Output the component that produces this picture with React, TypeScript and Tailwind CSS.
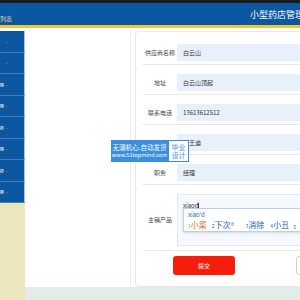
export default function App() {
  const rows = [
    { label: '供应商名称', value: '白云山' },
    { label: '地址', value: '白云山顶起' },
    { label: '联系电话', value: '13613612512' },
    { label: '联系人', value: '李王迪' },
    { label: '职务', value: '经理' },
  ];
  const side = ['', '', '理', '理', '择', '理', '择', '理'];

  return (
    <div className="w-[300px] h-[300px] overflow-hidden relative flex flex-col bg-white font-['Noto_Sans_CJK_SC',sans-serif]">
      <div className="h-[3px] shrink-0 bg-[#1b1b1b]" />
      <div className="h-[22px] shrink-0 bg-[#0b57a2] flex items-center">
        <span className="mt-[10px] text-[6px] leading-none text-[#e8dc9a] whitespace-nowrap">列表</span>
        <span className="ml-auto w-[50px] overflow-hidden whitespace-nowrap text-[9px] leading-none text-white">小型药店管理系统</span>
      </div>
      <div className="h-[3px] shrink-0 bg-[#f4c430]" />

      <div className="flex flex-1 min-h-0">
        {/* sidebar */}
        <div className="w-[25px] shrink-0 flex flex-col bg-[#ece6bf]">
          <div className="h-[3px] bg-white" />
          {side.map((ch, i) => (
            <div
              key={i}
              className="h-[21.5px] flex items-center gap-[2px] bg-[#0c57a0] border-b border-[#3f7fc0] border-r border-r-[#a9c3dc] text-[5px] leading-none text-white"
            >
              <span className="w-[4px] overflow-hidden whitespace-nowrap flex justify-end">{ch}</span>
              <span className="text-[#9fbde0]">-</span>
            </div>
          ))}
        </div>

        {/* main */}
        <div className="flex-1 flex flex-col min-w-0">
          <div className="h-[259px] shrink-0 flex bg-white">
            <div className="w-[106px] shrink-0 border-r border-[#efefef]" />
            <div className="w-[4px] shrink-0" />
            <div className="flex-1 mt-[3px] h-[256px] rounded-l-[4px] border border-r-0 border-[#e6e6e6] border-t-[#f3ead0] bg-white px-[7px] pt-[3px] flex flex-col">
              {rows.map((r) => (
                <div key={r.label} className="flex items-center pt-[9px] pb-[3px] border-b border-[#e8e8e8]">
                  <span className="w-[34px] shrink-0 text-center text-[6px] leading-none text-[#444] whitespace-nowrap">{r.label}</span>
                  <div className="flex-1 h-[17px] bg-[#e8f0fb] pl-[6px] flex items-center text-[6px] leading-none text-[#333] whitespace-nowrap">
                    {r.value}
                  </div>
                </div>
              ))}
              <div className="flex items-center pt-[9px] pb-[4px] border-b border-[#e8e8e8]">
                <span className="w-[34px] shrink-0 text-center text-[6px] leading-none text-[#444] whitespace-nowrap">主销产品</span>
                <div className="flex-1 h-[52px] bg-[#f5f8fc] border border-[#e2e8f0] pl-[5px] pt-[8px] text-[6px] leading-none text-[#333]">
                  <span>xiaod</span>
                  <span className="inline-block w-[1px] h-[6px] bg-[#333] align-middle" />
                </div>
              </div>
              <div className="flex items-center pt-[5px]">
                <button className="ml-[30px] w-[62px] h-[19px] rounded-[3px] bg-[#f61e0b] text-[6px] leading-none text-white">提交</button>
                <button className="ml-[61px] w-[40px] h-[19px] shrink-0 rounded-[3px] border border-[#d0d0d0] bg-white" />
              </div>
            </div>
          </div>
          <div className="flex-1 bg-[#e4ece9]" />
        </div>
      </div>

      {/* IME candidate window */}
      <div className="absolute left-[183px] top-[208px] w-[130px] h-[24px] border border-[#bccfe4] bg-white shadow-sm px-[4px] flex flex-col justify-center gap-[3px]">
        <span className="text-[6px] leading-none text-[#2a62b8]">xiao'd</span>
        <div className="flex items-end whitespace-nowrap text-[8px] leading-none text-[#2a62b8]">
          <span className="text-[#e0702a]"><span className="text-[5px]">1</span>小菜</span>
          <span className="ml-[5px]"><span className="text-[5px]">2</span>下次<sup className="text-[4px]">⊕</sup></span>
          <span className="ml-[11px]"><span className="text-[5px]">3</span>消除</span>
          <span className="ml-[6px]"><span className="text-[5px]">4</span>小丑</span>
          <span className="ml-[4px] text-[5px]">5</span>
        </div>
      </div>

      {/* watermark */}
      <div className="absolute left-[111px] top-[140px] flex h-[22px]">
        <div className="w-[57px] bg-[#3a8ee0] flex flex-col justify-center items-center text-white leading-none gap-[3px]">
          <span className="text-[6.5px] whitespace-nowrap">无潮机心.自动发货</span>
          <span className="text-[5.5px] whitespace-nowrap">www.51topmind.com</span>
        </div>
        <div className="w-[21px] bg-white border border-[#3a8ee0] flex flex-col justify-center items-center text-[#3a8ee0] text-[7px] leading-none gap-[1px]">
          <span>毕业</span>
          <span>设计</span>
        </div>
      </div>
    </div>
  );
}
